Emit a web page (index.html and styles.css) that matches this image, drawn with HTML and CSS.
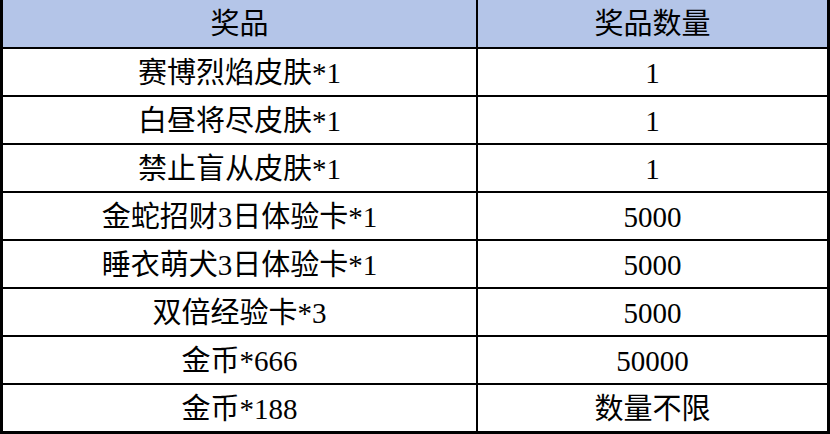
FILE: index.html
```html
<!DOCTYPE html>
<html lang="zh">
<head>
<meta charset="utf-8">
<link rel="stylesheet" href="styles.css">
</head>
<body>
<div class="table">
  <div class="cell head">奖品</div>
  <div class="cell head">奖品数量</div>
  <div class="cell">赛博烈焰皮肤*1</div>
  <div class="cell">1</div>
  <div class="cell">白昼将尽皮肤*1</div>
  <div class="cell">1</div>
  <div class="cell">禁止盲从皮肤*1</div>
  <div class="cell">1</div>
  <div class="cell">金蛇招财3日体验卡*1</div>
  <div class="cell">5000</div>
  <div class="cell">睡衣萌犬3日体验卡*1</div>
  <div class="cell">5000</div>
  <div class="cell">双倍经验卡*3</div>
  <div class="cell">5000</div>
  <div class="cell">金币*666</div>
  <div class="cell">50000</div>
  <div class="cell">金币*188</div>
  <div class="cell">数量不限</div>
</div>
</body>
</html>
```
FILE: styles.css
```css
html, body {
  margin: 0;
  padding: 0;
  background: #fff;
}
.table {
  width: 830px;
  height: 434px;
  box-sizing: border-box;
  display: grid;
  grid-template-columns: 473px 349px;
  grid-template-rows: 47px repeat(8, 46px);
  column-gap: 2px;
  row-gap: 2px;
  padding: 0 3px 3px 3px;
  background: #000;
  font-family: "Liberation Serif", "Noto Sans CJK SC", serif;
  font-size: 29px;
  color: #000;
}
.cell {
  background: #fff;
  display: flex;
  align-items: center;
  justify-content: center;
  line-height: 1;
  padding-top: 2px;
  box-sizing: border-box;
}
.head {
  background: #b4c5e8;
  padding-top: 1px;
}
```
